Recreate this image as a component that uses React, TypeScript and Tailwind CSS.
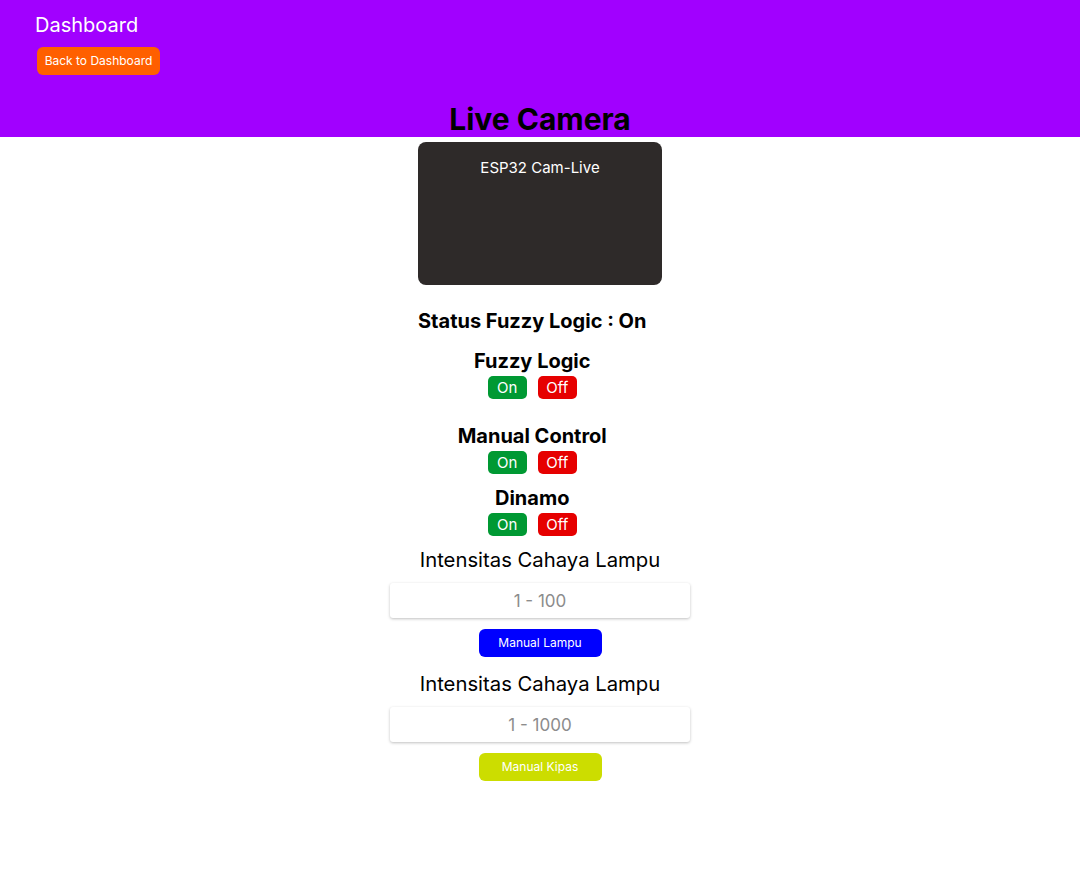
import React from "react";

function OnOff() {
  return (
    <div className="flex gap-[11px]">
      <button className="h-[23px] w-[39px] rounded-[5px] bg-[#009933] text-[15px] leading-[23px] text-white">On</button>
      <button className="h-[23px] w-[39px] rounded-[5px] bg-[#e60000] text-[15px] leading-[23px] text-white">Off</button>
    </div>
  );
}

export default function App() {
  return (
    <div className="min-h-[874px] bg-white font-['Inter',sans-serif] text-black">
      <header className="h-[137px] bg-[#a100ff] pt-[12px] flex flex-col">
        <div className="pl-[35px] text-[20px] leading-[26px] text-white">Dashboard</div>
        <div className="pl-[37px] mt-[9px]">
          <button className="h-[28px] w-[123px] rounded-[6px] bg-[#ff5f00] text-[12px] leading-[28px] text-white">Back to Dashboard</button>
        </div>
        <h1 className="mt-[24px] text-center text-[30px] font-bold leading-[40px]">Live Camera</h1>
      </header>
      <div className="mx-auto w-[244px] pt-[5px]">
        <div className="h-[143px] w-[244px] rounded-[8px] bg-[#2e2a29] pt-[15px] text-center text-[15px] text-white">
          ESP32 Cam-Live
        </div>
        <div className="w-fit mt-[21px] flex flex-col items-center">
          <div className="text-[20px] font-bold leading-[30px]">Status Fuzzy Logic : On</div>
          <div className="mt-[10px] text-[20px] font-bold leading-[30px]">Fuzzy Logic</div>
          <OnOff />
          <div className="mt-[22px] text-[20px] font-bold leading-[30px]">Manual Control</div>
          <OnOff />
          <div className="mt-[9px] text-[20px] font-bold leading-[30px]">Dinamo</div>
          <OnOff />
        </div>
      </div>
      <div className="flex flex-col items-center">
        <div className="mt-[9px] text-[20.3px] leading-[30px]">Intensitas Cahaya Lampu</div>
        <input
          placeholder="1 - 100"
          className="mt-[8px] h-[35px] w-[300px] rounded-[3px] bg-white text-center text-[17px] text-black placeholder:text-[#8c8c8c] shadow-[0_1px_3px_rgba(0,0,0,0.25)] outline-none"
        />
        <button className="mt-[11px] h-[28px] w-[123px] rounded-[6px] bg-[#0000ff] text-[12px] text-white">Manual Lampu</button>
        <div className="mt-[12px] text-[20.3px] leading-[30px]">Intensitas Cahaya Lampu</div>
        <input
          placeholder="1 - 1000"
          className="mt-[8px] h-[35px] w-[300px] rounded-[3px] bg-white text-center text-[17px] text-black placeholder:text-[#8c8c8c] shadow-[0_1px_3px_rgba(0,0,0,0.25)] outline-none"
        />
        <button className="mt-[11px] h-[28px] w-[123px] rounded-[6px] bg-[#ccdd00] text-[12px] text-white">Manual Kipas</button>
      </div>
    </div>
  );
}
